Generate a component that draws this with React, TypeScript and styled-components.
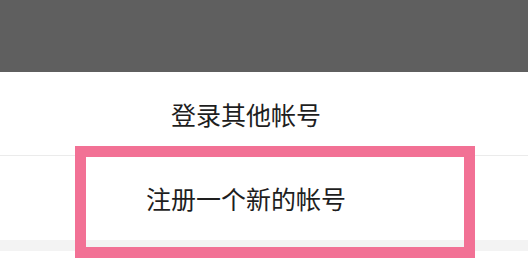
import React from "react";
import styled, { createGlobalStyle } from "styled-components";

const GlobalStyle = createGlobalStyle`
  html, body {
    margin: 0;
    padding: 0;
    background: #ffffff;
  }
  body {
    font-family: "Noto Sans CJK SC", "Noto Sans", sans-serif;
  }
`;

const Page = styled.div`
  position: relative;
  width: 528px;
  height: 269px;
  overflow: hidden;
  background: #ffffff;
`;

const Mask = styled.div`
  height: 72px;
  background: #5f5f5f;
`;

const Sheet = styled.div`
  display: flex;
  flex-direction: column;
  background: #ffffff;
`;

const Option = styled.div<{ $last?: boolean }>`
  height: ${(p) => (p.$last ? "84px" : "83px")};
  display: flex;
  align-items: center;
  justify-content: center;
  padding-right: 36px;
  border-bottom: ${(p) => (p.$last ? "none" : "1px solid #ebebeb")};
  font-size: 25px;
  color: #1e1e1e;
  letter-spacing: 0;
`;

const Spacer = styled.div`
  height: 11px;
  background: #f3f3f3;
`;

const Highlight = styled.div`
  position: absolute;
  left: 75px;
  top: 146px;
  width: 400px;
  height: 112px;
  box-sizing: border-box;
  border: 11px solid #f27195;
  pointer-events: none;
`;

export default function App() {
  return (
    <>
      <GlobalStyle />
      <Page>
        <Mask />
        <Sheet>
          <Option>登录其他帐号</Option>
          <Option $last>注册一个新的帐号</Option>
          <Spacer />
        </Sheet>
        <Highlight />
      </Page>
    </>
  );
}
